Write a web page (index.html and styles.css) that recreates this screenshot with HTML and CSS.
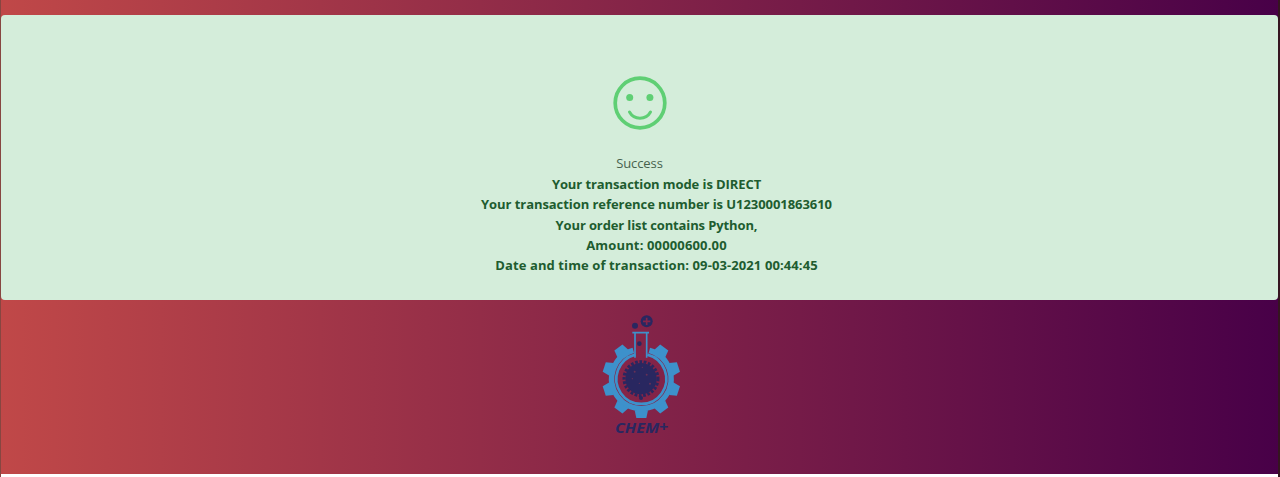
FILE: index.html
```html
<!DOCTYPE html>
<html lang="en">
<head>
<meta charset="utf-8">
<title>Transaction status</title>
<link rel="stylesheet" href="styles.css">
</head>
<body>
<main class="page">
  <section class="alert">
    <svg class="smile" viewBox="0 0 54 54" fill="none" stroke="#5fcf74">
      <circle cx="27" cy="27" r="24.8" stroke-width="3.7"/>
      <circle cx="16.7" cy="21.5" r="3.5" fill="#5fcf74" stroke="none"/>
      <circle cx="36.9" cy="21.5" r="3.5" fill="#5fcf74" stroke="none"/>
      <path d="M16.5 36C21 44.200 33 44.200 37.500 36" stroke-width="3" stroke-linecap="round"/>
    </svg>
    <p class="status">Success</p>
    <div class="details">
      <p class="line mode">Your transaction mode is DIRECT</p>
      <p class="line reference">Your transaction reference number is U1230001863610</p>
      <p class="line order">Your order list contains Python,</p>
      <p class="line amount">Amount: 00000600.00</p>
      <p class="line date">Date and time of transaction: 09-03-2021 00:44:45</p>
    </div>
  </section>
  <footer class="brand">
    <svg class="logo" viewBox="0 0 300 420">
      <defs><path id="tooth" d="M-20 94L-15 117H15L20 94Z"/></defs>
      <g transform="translate(154 222)" fill="#3d91cb">
        <use href="#tooth"/><use href="#tooth" transform="rotate(36)"/><use href="#tooth" transform="rotate(72)"/><use href="#tooth" transform="rotate(108)"/><use href="#tooth" transform="rotate(144)"/><use href="#tooth" transform="rotate(216)"/><use href="#tooth" transform="rotate(252)"/><use href="#tooth" transform="rotate(288)"/><use href="#tooth" transform="rotate(324)"/>
        <path d="M-24 -86A89 89 0 1 0 24 -86" fill="none" stroke="#3d91cb" stroke-width="16"/>
        <path d="M-18 -73A75 75 0 1 0 18 -73" fill="none" stroke="#3d91cb" stroke-width="8"/>
      </g>
      <path d="M127 83H177M135 85V158M170 85V158" fill="none" stroke="#3d91cb" stroke-width="5"/>
      <g fill="#292760">
        <circle cx="135" cy="62" r="9"/><circle cx="148" cy="116" r="7"/><circle cx="170" cy="49" r="18"/>
        <circle cx="153" cy="221" r="47"/>
        <circle cx="153" cy="221" r="51" fill="none" stroke="#292760" stroke-width="9" stroke-dasharray="8 5"/>
        <circle cx="153" cy="279" r="6"/>
      </g>
      <path d="M159 49H181M170 38V60" stroke="#85244a" stroke-width="5"/>
      <g fill="#653057"><circle cx="134" cy="200" r="3"/><circle cx="170" cy="209" r="3"/><circle cx="148" cy="235" r="2"/><circle cx="180" cy="236" r="3"/><circle cx="127" cy="221" r="2"/><circle cx="157" cy="187" r="2"/></g>
      <text class="wordmark" x="75" y="384" textLength="160" lengthAdjust="spacingAndGlyphs">CHEM<tspan dy="-4">+</tspan></text>
    </svg>
  </footer>
</main>
</body>
</html>
```
FILE: styles.css
```css
* { box-sizing: border-box; }
body { margin: 0; background: #fff; font-family: "Open Sans", sans-serif; }
p { margin: 0; }
.page { height: 477px; border-left: 1px solid #874641; border-right: 2px solid #35151f; background: linear-gradient(90deg, #c04848, #480048) 0 0 / 100% 474px no-repeat; padding-top: 15px; }
.alert { height: 285px; padding-top: 61px; border-radius: 4px; background: #d4edda; display: flex; flex-direction: column; align-items: center; color: #155724; }
.smile { width: 54px; height: 54px; }
.status { margin-top: 23.3px; font-size: 13px; line-height: 20.4px; font-weight: 400; letter-spacing: -0.1px; color: #47624d; }
.details { margin-left: 34px; text-align: center; font-size: 13px; line-height: 20.4px; font-weight: 700; color: #205c2f; }
.line { white-space: nowrap; }
.mode { letter-spacing: -0.09px; }
.reference { letter-spacing: -0.06px; }
.order { letter-spacing: -0.12px; }
.amount { letter-spacing: 0.15px; }
.date { letter-spacing: 0.1px; }
.brand { display: flex; justify-content: center; padding: 5px 0 0 1px; }
.logo { width: 100px; height: 140px; }
.wordmark { font: italic 700 40px "Open Sans", sans-serif; fill: #292760; }
```
